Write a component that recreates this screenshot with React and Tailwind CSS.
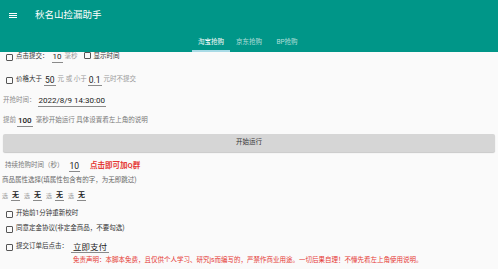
import { useState } from "react";

function Box({ checked, onClick }) {
  return (
    <span
      onClick={onClick}
      className="inline-flex h-[7px] w-[7px] shrink-0 items-center justify-center rounded-[1px] border border-[#555]"
    >
      {checked && <span className="h-[3px] w-[3px] bg-[#009688]" />}
    </span>
  );
}

function Value({ children, className = "" }) {
  return (
    <span className={"border-b border-[#8a8a8a] px-[1px] leading-[10px] text-[#222] " + className}>
      {children}
    </span>
  );
}

export default function App() {
  const [tab, setTab] = useState(0);
  const [checks, setChecks] = useState({});
  const toggle = (k) => setChecks({ ...checks, [k]: !checks[k] });

  const tabs = ["淘宝抢购", "京东抢购", "BP抢购"];

  return (
    <div className="h-[269px] w-[498px] overflow-hidden bg-[#fafafa] font-['Roboto','Noto_Sans_CJK_SC',sans-serif] text-[6.5px] text-[#333]">
      {/* Header */}
      <div className="flex h-[52px] flex-col bg-[#009688]">
        <div className="flex h-[30px] items-center pl-[9px]">
          <div className="flex w-[8px] flex-col gap-[1px]">
            <span className="h-[1px] bg-white" />
            <span className="h-[1px] bg-white" />
            <span className="h-[1px] bg-white" />
          </div>
          <span className="ml-[18px] text-[9.5px] text-white">秋名山捡漏助手</span>
        </div>
        <div className="flex flex-1 justify-center">
          {tabs.map((t, i) => (
            <button
              key={t}
              onClick={() => setTab(i)}
              className={
                "flex w-[38px] flex-col items-center justify-end " +
                (i === tab ? "text-white" : "text-white/70")
              }
            >
              <span className="mb-[5px] text-[6.5px] leading-none">{t}</span>
              <span className={"h-[2px] w-full " + (i === tab ? "bg-[#a9dbe6]" : "bg-transparent")} />
            </button>
          ))}
        </div>
      </div>

      {/* Body */}
      <div className="flex flex-col">
        <div className="flex h-[10px] items-center pl-[6px]">
          <Box checked={checks.click} onClick={() => toggle("click")} />
          <span className="ml-[3px]">点击提交：</span>
          <Value className="ml-[3px] text-[8px]">10</Value>
          <span className="ml-[2px] text-[#999]">毫秒</span>
          <span className="ml-[6px]">
            <Box checked={checks.show} onClick={() => toggle("show")} />
          </span>
          <span className="ml-[3px]">显示时间</span>
        </div>

        <div className="mt-[11px] flex h-[14px] items-center pl-[6px]">
          <Box checked={checks.price} onClick={() => toggle("price")} />
          <span className="ml-[3px]">价格大于</span>
          <Value className="ml-[2px] text-[8.5px]">50</Value>
          <span className="ml-[2px] text-[#999]">元 或 小于</span>
          <Value className="ml-[1px] text-[8.5px]">0.1</Value>
          <span className="ml-[2px] text-[#999]">元时不提交</span>
        </div>

        <div className="mt-[7px] flex h-[14px] items-center pl-[3px]">
          <span className="text-[#888]">开抢时间：</span>
          <Value className="ml-[2px] text-[8px]">2022/8/9 14:30:00</Value>
        </div>

        <div className="mt-[6px] flex h-[14px] items-center pl-[3px]">
          <span className="text-[#888]">提前</span>
          <Value className="ml-[1px] text-[8px] font-medium">100</Value>
          <span className="ml-[3px] text-[#777]">毫秒开始运行 具体设置看左上角的说明</span>
        </div>

        <button className="mx-[3px] mt-[6px] h-[18px] rounded-[2px] bg-[#d6d6d6] font-normal text-[#333] shadow-[0_1px_1px_rgba(0,0,0,0.2)]">
          开始运行
        </button>

        <div className="mt-[7px] flex h-[14px] items-center pl-[5px]">
          <span className="text-[#777]">持续抢购时间（秒）</span>
          <Value className="ml-[5px] text-[8.5px]">10</Value>
          <span className="ml-[10px] text-[7.5px] font-bold text-[#e53935]">点击即可加Q群</span>
        </div>

        <div className="mt-[2px] flex h-[12px] items-center pl-[2px] text-[#666]">
          商品属性选择(填属性包含有的字，为无即跳过)
        </div>

        <div className="mt-[1px] flex h-[14px] items-center pl-[2px]">
          {[0, 1, 2, 3].map((i) => (
            <span key={i} className="mr-[4px] flex items-center">
              <span className="text-[6px] text-[#999]">选</span>
              <Value className="ml-[3px] text-[7px] font-bold">无</Value>
            </span>
          ))}
        </div>

        <div className="mt-[5px] flex h-[14px] items-center pl-[6px]">
          <Box checked={checks.sync} onClick={() => toggle("sync")} />
          <span className="ml-[3px]">开始前1分钟重新校时</span>
        </div>

        <div className="mt-[1px] flex h-[14px] items-center pl-[6px]">
          <Box checked={checks.deposit} onClick={() => toggle("deposit")} />
          <span className="ml-[3px]">同意定金协议(非定金商品，不要勾选)</span>
        </div>

        <div className="mt-[4px] flex h-[14px] items-center pl-[6px]">
          <Box checked={checks.pay} onClick={() => toggle("pay")} />
          <span className="ml-[3px]">提交订单后点击：</span>
          <Value className="ml-[3px] px-[2px] text-[8.5px]">立即支付</Value>
        </div>

        <div className="mt-[1px] flex h-[12px] items-center pl-[73px] text-[#e53935]">
          免责声明：本脚本免费，且仅供个人学习、研究js而编写的，严禁作商业用途。一切后果自理！不懂先看左上角使用说明。
        </div>
      </div>
    </div>
  );
}
